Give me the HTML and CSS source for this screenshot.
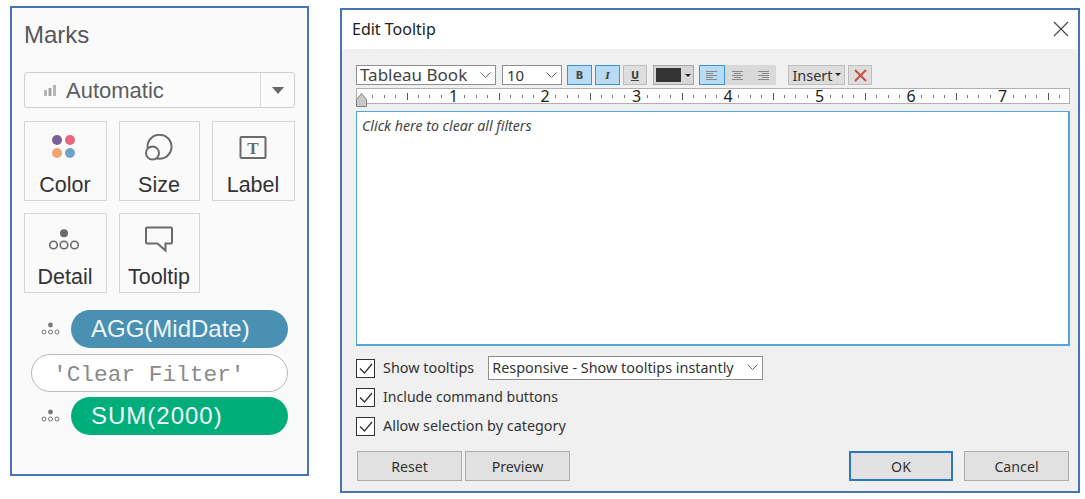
FILE: index.html
```html
<!DOCTYPE html>
<html>

<head>
    <meta charset="UTF-8">
    <title>Marks and Edit Tooltip</title>
    <link rel="stylesheet" href="styles.css">
</head>

<body>
    <div class="page">

        <section class="marks">
            <h2 class="marks-title">Marks</h2>

            <div class="mark-type">
                <div class="mark-type-name">
                    <svg class="bars-icon" width="12" height="11" viewBox="0 0 12 11">
                        <rect x="0" y="5" width="3" height="6" fill="#b5b5b5"/>
                        <rect x="4.5" y="3" width="3" height="8" fill="#a5a5a5"/>
                        <rect x="9" y="0" width="3" height="11" fill="#b5b5b5"/>
                    </svg>
                    Automatic
                </div>
                <div class="mark-type-arrow"><span class="arrow-down"></span></div>
            </div>

            <div class="cards">
                <div class="card">
                    <svg width="28" height="28" viewBox="0 0 28 28">
                        <circle cx="6" cy="6" r="5" fill="#7b5f98"/>
                        <circle cx="19" cy="6" r="5" fill="#e9677d"/>
                        <circle cx="6" cy="19" r="5" fill="#f0a672"/>
                        <circle cx="19" cy="19" r="5" fill="#6fa3cb"/>
                    </svg>
                    <span>Color</span>
                </div>
                <div class="card">
                    <svg width="30" height="28" viewBox="0 0 30 28" fill="none" stroke="#6a6a6a" stroke-width="2">
                        <circle cx="15.5" cy="12.7" r="12"/>
                        <circle cx="8.5" cy="19" r="6.5" fill="#fafafa"/>
                    </svg>
                    <span>Size</span>
                </div>
                <div class="card">
                    <svg width="28" height="28" viewBox="0 0 28 28">
                        <rect x="1.5" y="3" width="25" height="21" rx="1" fill="none" stroke="#6a6a6a" stroke-width="2"/>
                        <text x="14" y="20" text-anchor="middle" class="label-t">T</text>
                    </svg>
                    <span>Label</span>
                </div>
                <div class="card">
                    <svg width="32" height="28" viewBox="0 0 32 28" fill="none" stroke="#6a6a6a" stroke-width="1.6">
                        <circle cx="15" cy="7.3" r="4" fill="#6a6a6a" stroke="none"/>
                        <circle cx="4.5" cy="19" r="3.8"/>
                        <circle cx="15" cy="19" r="3.8"/>
                        <circle cx="25.5" cy="19" r="3.8"/>
                    </svg>
                    <span>Detail</span>
                </div>
                <div class="card">
                    <svg width="30" height="28" viewBox="0 0 30 28" fill="none" stroke="#6a6a6a" stroke-width="2">
                        <path d="M3 1.5h24a1 1 0 0 1 1 1v14a1 1 0 0 1-1 1h-5.5v7l-8-7H3a1 1 0 0 1-1-1v-14a1 1 0 0 1 1-1z"/>
                    </svg>
                    <span>Tooltip</span>
                </div>
            </div>

            <div class="pills">
                <div class="pill-row">
                    <svg class="detail-icon" width="19" height="14" viewBox="0 0 19 14" fill="none" stroke="#777" stroke-width="1">
                        <circle cx="9.5" cy="3" r="2.4" fill="#777" stroke="none"/>
                        <circle cx="3" cy="10" r="2"/>
                        <circle cx="9.5" cy="10" r="2"/>
                        <circle cx="16" cy="10" r="2"/>
                    </svg>
                    <div class="pill pill-blue">AGG(MidDate)</div>
                </div>
                <div class="pill pill-text">'Clear Filter'</div>
                <div class="pill-row">
                    <svg class="detail-icon" width="19" height="14" viewBox="0 0 19 14" fill="none" stroke="#777" stroke-width="1">
                        <circle cx="9.5" cy="3" r="2.4" fill="#777" stroke="none"/>
                        <circle cx="3" cy="10" r="2"/>
                        <circle cx="9.5" cy="10" r="2"/>
                        <circle cx="16" cy="10" r="2"/>
                    </svg>
                    <div class="pill pill-green">SUM(2000)</div>
                </div>
            </div>
        </section>

        <section class="dialog">
            <div class="dialog-head">
                <span>Edit Tooltip</span>
                <svg width="16" height="16" viewBox="0 0 16 16" stroke="#444" stroke-width="1.1">
                    <path d="M1 1l14 14M15 1L1 15"/>
                </svg>
            </div>

            <div class="dialog-body">
                <div class="toolbar">
                    <div class="combo combo-font">Tableau Book
                        <svg class="chevron" width="11" height="6" viewBox="0 0 11 6"><path d="M.5.5l5 5 5-5"/></svg>
                    </div>
                    <div class="combo combo-size">10
                        <svg class="chevron" width="11" height="6" viewBox="0 0 11 6"><path d="M.5.5l5 5 5-5"/></svg>
                    </div>
                    <div class="tool on tool-b">B</div>
                    <div class="tool on tool-i">I</div>
                    <div class="tool tool-u">U</div>
                    <div class="color-pick"><span class="swatch"></span><span class="arrow-small"></span></div>
                    <div class="align-group">
                        <div class="tool on">
                            <svg width="11" height="9" viewBox="0 0 11 9" stroke="#888"><path d="M0 .5h11M0 2.5h7M0 4.5h11M0 6.5h7M0 8.5h11"/></svg>
                        </div>
                        <div class="tool plain">
                            <svg width="11" height="9" viewBox="0 0 11 9" stroke="#888"><path d="M0 .5h11M2 2.5h7M0 4.5h11M2 6.5h7M0 8.5h11"/></svg>
                        </div>
                        <div class="tool plain">
                            <svg width="11" height="9" viewBox="0 0 11 9" stroke="#888"><path d="M0 .5h11M4 2.5h7M0 4.5h11M4 6.5h7M0 8.5h11"/></svg>
                        </div>
                    </div>
                    <div class="tool insert">Insert<span class="arrow-small"></span></div>
                    <div class="tool clear">
                        <svg width="13" height="13" viewBox="0 0 13 13" stroke="#c9503c" stroke-width="2"><path d="M1 1l11 11M12 1L1 12"/></svg>
                    </div>
                </div>

                <div class="ruler">
                    <div class="inch"><span>1</span></div>
                    <div class="inch"><span>2</span></div>
                    <div class="inch"><span>3</span></div>
                    <div class="inch"><span>4</span></div>
                    <div class="inch"><span>5</span></div>
                    <div class="inch"><span>6</span></div>
                    <div class="inch"><span>7</span></div>
                    <div class="inch inch-last"></div>
                    <svg class="ruler-mark" width="11" height="14" viewBox="0 0 11 14">
                        <path d="M5.5.5l5 6v7H.5v-7z" fill="#c8c8c8" stroke="#808080"/>
                    </svg>
                </div>

                <div class="editor">Click here to clear all filters</div>

                <div class="options">
                    <div class="option">
                        <span class="check"><svg width="14" height="11" viewBox="0 0 14 11"><path d="M1 5.5l4.5 4.5L13 1"/></svg></span>
                        <span class="option-text">Show tooltips</span>
                        <div class="combo combo-mode">Responsive - Show tooltips instantly
                            <svg class="chevron" width="11" height="6" viewBox="0 0 11 6"><path d="M.5.5l5 5 5-5"/></svg>
                        </div>
                    </div>
                    <div class="option">
                        <span class="check"><svg width="14" height="11" viewBox="0 0 14 11"><path d="M1 5.5l4.5 4.5L13 1"/></svg></span>
                        <span class="option-text option-narrow">Include command buttons</span>
                    </div>
                    <div class="option">
                        <span class="check"><svg width="14" height="11" viewBox="0 0 14 11"><path d="M1 5.5l4.5 4.5L13 1"/></svg></span>
                        <span class="option-text">Allow selection by category</span>
                    </div>
                </div>

                <div class="dialog-foot">
                    <div class="foot-left">
                        <button class="btn">Reset</button>
                        <button class="btn">Preview</button>
                    </div>
                    <div class="foot-right">
                        <button class="btn btn-default">OK</button>
                        <button class="btn">Cancel</button>
                    </div>
                </div>
            </div>
        </section>

    </div>
</body>

</html>
```

FILE: styles.css
```css
* {
    box-sizing: border-box;
}

body {
    margin: 0;
    background-color: #fff;
    font-family: "Noto Sans", sans-serif;
    overflow: hidden;
}

.page {
    display: flex;
    align-items: flex-start;
    gap: 31px;
    padding: 6px 0 0 10px;
}

/* marks card */

.marks {
    width: 299px;
    height: 470px;
    padding: 0 12px 0 12px;
    background-color: #fafafa;
    border: 2px solid #4a72b6;
    font-family: "Liberation Sans", Arial, sans-serif;
}

.marks-title {
    margin: 11px 0 21px;
    height: 32px;
    line-height: 32px;
    font-size: 24px;
    font-weight: normal;
    color: #55585c;
}

.mark-type {
    display: flex;
    height: 36px;
    background-color: #fbfbfb;
    border: 1px solid #d0d0d0;
    border-radius: 3px;
}

.mark-type-name {
    flex: 1;
    display: flex;
    align-items: center;
    gap: 10px;
    padding: 1px 0 0 19px;
    font-size: 22px;
    color: #5a5d61;
}

.mark-type-arrow {
    width: 34px;
    display: flex;
    align-items: center;
    justify-content: center;
    border-left: 1px solid #dcdcdc;
}

.arrow-down {
    border-left: 6px solid transparent;
    border-right: 6px solid transparent;
    border-top: 7px solid #666;
}

.cards {
    display: grid;
    grid-template-columns: 83px 81px 83px;
    grid-auto-rows: 80px;
    gap: 12px;
    margin-top: 13px;
}

.card {
    display: flex;
    flex-direction: column;
    align-items: center;
    padding: 12px 1px 0 0;
    border: 1px solid #d6d6d6;
    font-size: 21.5px;
    color: #333;
}

.card svg {
    height: 28px;
    margin-bottom: 9px;
}

.card span {
    line-height: 28px;
}

.label-t {
    font-family: "Liberation Serif", serif;
    font-weight: bold;
    font-size: 17px;
    fill: #6a6a6a;
}

.pills {
    display: flex;
    flex-direction: column;
    gap: 5px;
    margin-top: 17px;
    padding: 0 7px;
}

.pill-row {
    display: flex;
    align-items: center;
    justify-content: space-between;
}

.detail-icon {
    margin-left: 9.5px;
}

.pill {
    display: flex;
    align-items: center;
    height: 38px;
    padding-left: 20px;
    border-radius: 19px;
    font-size: 24px;
    color: #eef6f8;
}

.pill-row .pill {
    width: 217px;
}

.pill-blue {
    background-color: #4a90b2;
}

.pill-green {
    background-color: #00ae7c;
    letter-spacing: 1px;
}

.pill-text {
    margin-top: 1px;
    padding: 4px 0 0 21px;
    background-color: #fff;
    border: 1px solid #b8b8b8;
    font-family: "Liberation Mono", monospace;
    font-size: 22.8px;
    color: #8a8a8a;
}

/* edit tooltip dialog */

.dialog {
    width: 740px;
    height: 485px;
    margin-top: 2px;
    display: flex;
    flex-direction: column;
    border: 2px solid #4a72b6;
}

.dialog-head {
    height: 39px;
    display: flex;
    align-items: center;
    justify-content: space-between;
    padding: 0 9px 2px 10px;
    background-color: #fff;
    font-size: 16px;
    color: #222;
}

.dialog-body {
    flex: 1;
    padding: 16px 8px 0 14px;
    background-color: #f0f0f0;
}

.toolbar {
    display: flex;
    height: 20px;
}

.combo {
    display: flex;
    align-items: center;
    justify-content: space-between;
    background-color: #fff;
    border: 1px solid #8f8f8f;
    color: #333;
}

.combo-font {
    width: 140px;
    padding: 0 4px 1px 3px;
    font-size: 17px;
    color: #444;
}

.combo-size {
    width: 60px;
    margin-left: 6px;
    padding: 0 4px;
    font-size: 15px;
}

.combo-mode {
    width: 275px;
    height: 24px;
    margin-left: 14px;
    padding: 0 4px 2px 3px;
    font-size: 14.4px;
}

.chevron {
    fill: none;
    stroke: #666;
}

.tool {
    width: 25px;
    display: flex;
    align-items: center;
    justify-content: center;
    background-color: #dddddd;
    border: 1px solid #bdbdbd;
    font-family: "DejaVu Serif", serif;
    font-size: 10px;
    color: #444;
}

.tool.on {
    background-color: #b8dcf5;
    border-color: #3c94d4;
}

.tool-b {
    margin-left: 5px;
    font-family: "DejaVu Sans", sans-serif;
    font-weight: bold;
}

.tool-i {
    margin-left: 3px;
    font-style: italic;
    font-weight: bold;
}

.tool-u {
    width: 24px;
    margin-left: 3px;
    font-family: "DejaVu Sans", sans-serif;
    font-weight: bold;
    text-decoration: underline;
}

.color-pick {
    width: 41px;
    margin-left: 6px;
    display: flex;
    align-items: center;
    gap: 2px;
    padding-left: 2px;
    background-color: #d6d6d6;
    border: 1px solid #a8a8a8;
}

.swatch {
    width: 25px;
    height: 14px;
    background-color: #333;
}

.arrow-small {
    display: inline-block;
    margin-left: 2px;
    border-left: 3px solid transparent;
    border-right: 3px solid transparent;
    border-top: 3px solid #222;
}

.align-group {
    display: flex;
    margin-left: 5px;
    width: 77px;
}

.align-group .tool {
    flex: 1;
}

.align-group .plain {
    background-color: #d9d9d9;
    border-color: #d9d9d9;
}

.insert {
    width: 57px;
    margin-left: 12px;
    padding-bottom: 1px;
    font-family: "Noto Sans", sans-serif;
    font-size: 14.5px;
    color: #333;
}

.clear {
    width: 24px;
    margin-left: 3px;
}

.ruler {
    position: relative;
    display: flex;
    height: 16px;
    margin-top: 3px;
    padding-left: 5px;
    background-color: #fff;
    border: 1px solid #b0b0b0;
}

.inch {
    flex: 0 0 91.5px;
    display: flex;
    align-items: center;
    justify-content: flex-end;
    background:
        linear-gradient(#555, #555) center / 1px 7px no-repeat,
        repeating-linear-gradient(to right, transparent 0 10.44px, #777 10.44px 11.44px) center / 100% 3px no-repeat;
    font-size: 16px;
    line-height: 14px;
    color: #222;
}

.inch-last {
    flex-basis: 65.5px;
    background-position: 45.75px center, center;
}

.inch span {
    margin-right: -5px;
    position: relative;
    z-index: 1;
    width: 10px;
    text-align: center;
    background-color: #fff;
}

.ruler-mark {
    position: absolute;
    left: -1px;
    top: 4px;
}

.editor {
    height: 235px;
    margin-top: 7px;
    padding: 4px 5px;
    background-color: #fff;
    border: 2px solid #52a6dc;
    border-width: 1px 2px 2px 1px;
    font-style: italic;
    font-size: 14.2px;
    color: #444;
}

.options {
    display: flex;
    flex-direction: column;
    gap: 5px;
    margin-top: 10px;
}

.option {
    display: flex;
    align-items: center;
    height: 24px;
}

.check {
    width: 19px;
    height: 19px;
    display: flex;
    align-items: center;
    justify-content: center;
    background-color: #fff;
    border: 1px solid #333;
}

.check path {
    fill: none;
    stroke: #333;
    stroke-width: 1.3;
}

.option-text {
    margin: 0 0 2px 8px;
    font-size: 14.4px;
    color: #333;
}

.option-narrow {
    font-size: 14.1px;
}

.dialog-foot {
    display: flex;
    justify-content: space-between;
    margin-top: 13px;
    padding: 0 1px;
}

.foot-left,
.foot-right {
    display: flex;
}

.foot-left {
    gap: 3px;
}

.foot-right {
    gap: 11px;
}

.btn {
    width: 105px;
    height: 30px;
    padding: 1px 0 0;
    background-color: #e1e1e1;
    border: 1px solid #adadad;
    font-family: "Noto Sans", sans-serif;
    font-size: 14.2px;
    color: #333;
}

.btn-default {
    width: 104px;
    border: 2px solid #2a78bd;
}
```
